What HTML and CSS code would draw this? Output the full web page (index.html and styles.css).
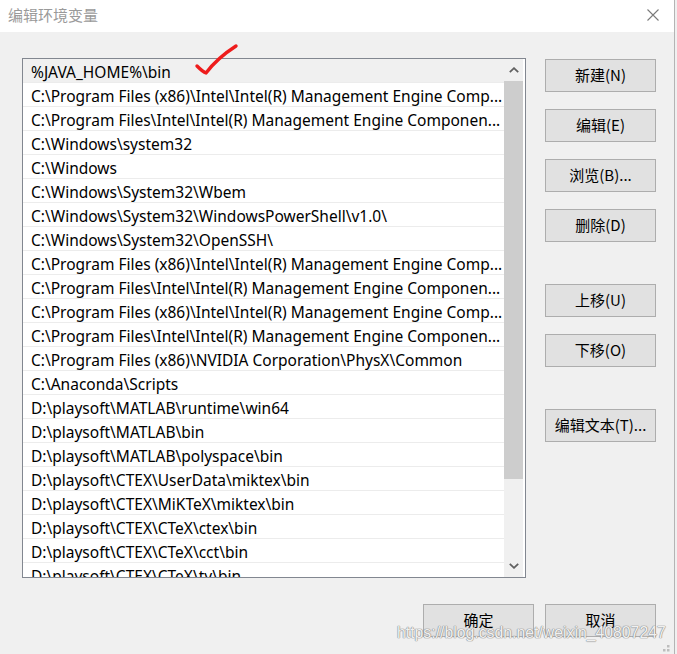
FILE: index.html
```html
<!DOCTYPE html>
<html lang="zh">
<head>
<meta charset="utf-8">
<title>编辑环境变量</title>
<link rel="stylesheet" href="styles.css">
</head>
<body>
<div class="window">
  <div class="titlebar">
    <span class="title">编辑环境变量</span>
    <svg class="close" width="12" height="12" viewBox="0 0 12 12"><path d="M0.5 0.5 L11.5 11.5 M11.5 0.5 L0.5 11.5" stroke="#7a7a7a" stroke-width="1.1" fill="none"/></svg>
  </div>
  <div class="content">
    <div class="main">
      <div class="list">
        <div class="rows">
          <div class="row selected">%JAVA_HOME%\bin</div>
          <div class="row">C:\Program Files (x86)\Intel\Intel(R) Management Engine Comp...</div>
          <div class="row">C:\Program Files\Intel\Intel(R) Management Engine Componen...</div>
          <div class="row">C:\Windows\system32</div>
          <div class="row">C:\Windows</div>
          <div class="row">C:\Windows\System32\Wbem</div>
          <div class="row">C:\Windows\System32\WindowsPowerShell\v1.0\</div>
          <div class="row">C:\Windows\System32\OpenSSH\</div>
          <div class="row">C:\Program Files (x86)\Intel\Intel(R) Management Engine Comp...</div>
          <div class="row">C:\Program Files\Intel\Intel(R) Management Engine Componen...</div>
          <div class="row">C:\Program Files (x86)\Intel\Intel(R) Management Engine Comp...</div>
          <div class="row">C:\Program Files\Intel\Intel(R) Management Engine Componen...</div>
          <div class="row">C:\Program Files (x86)\NVIDIA Corporation\PhysX\Common</div>
          <div class="row">C:\Anaconda\Scripts</div>
          <div class="row">D:\playsoft\MATLAB\runtime\win64</div>
          <div class="row">D:\playsoft\MATLAB\bin</div>
          <div class="row">D:\playsoft\MATLAB\polyspace\bin</div>
          <div class="row">D:\playsoft\CTEX\UserData\miktex\bin</div>
          <div class="row">D:\playsoft\CTEX\MiKTeX\miktex\bin</div>
          <div class="row">D:\playsoft\CTEX\CTeX\ctex\bin</div>
          <div class="row">D:\playsoft\CTEX\CTeX\cct\bin</div>
          <div class="row">D:\playsoft\CTEX\CTeX\ty\bin</div>
        </div>
        <div class="scrollbar">
          <div class="arrow">
            <svg width="10" height="6" viewBox="0 0 10 6"><path d="M0.8 5.2 L5 1.2 L9.2 5.2" stroke="#606060" stroke-width="1.8" fill="none"/></svg>
          </div>
          <div class="thumb"></div>
          <div class="track"></div>
          <div class="arrow">
            <svg width="10" height="6" viewBox="0 0 10 6"><path d="M0.8 0.8 L5 4.8 L9.2 0.8" stroke="#606060" stroke-width="1.8" fill="none"/></svg>
          </div>
        </div>
        <div class="list-pad"></div>
      </div>
      <div class="side">
        <button class="btn">新建(N)</button>
        <button class="btn">编辑(E)</button>
        <button class="btn">浏览(B)...</button>
        <button class="btn">删除(D)</button>
        <button class="btn gap-lg">上移(U)</button>
        <button class="btn">下移(O)</button>
        <button class="btn gap-lg">编辑文本(T)...</button>
      </div>
    </div>
    <div class="footer">
      <button class="btn">确定</button>
      <button class="btn">取消</button>
    </div>
  </div>
  <svg class="check" width="60" height="40" viewBox="0 0 60 40"><path d="M5 27 C8 30 11 33 14 34 C20 26 30 16 44 7" stroke="#ee1c1c" stroke-width="3.4" fill="none" stroke-linecap="round" stroke-linejoin="round"/></svg>
  <div class="watermark">https://blog.csdn.net/weixin_40807247</div>
  <svg class="grip" width="10" height="10" viewBox="0 0 10 10"><rect x="6" y="2" width="2.5" height="2.5" fill="#bdbdbd"/><rect x="2" y="6" width="2.5" height="2.5" fill="#bdbdbd"/><rect x="6" y="6" width="2.5" height="2.5" fill="#bdbdbd"/></svg>
</div>
</body>
</html>
```

FILE: styles.css
```css
* { box-sizing: border-box; }
html, body {
  margin: 0;
  padding: 0;
  background: #f0f0f0;
}
body {
  width: 677px;
  height: 654px;
  overflow: hidden;
  font-family: "Noto Sans", "Noto Sans CJK SC", sans-serif;
}
.window {
  position: relative;
  width: 675px;
  height: 654px;
  background: #f0f0f0;
  border-right: 1px solid #b4b4b4;
}
.titlebar {
  height: 32px;
  background: #ffffff;
  display: flex;
  align-items: center;
  justify-content: space-between;
  padding: 0 15px 3px 8px;
}
.title {
  font-family: "Noto Sans CJK SC", sans-serif;
  font-size: 15px;
  color: #9a9a9a;
}
.close { display: block; }
.content {
  padding: 26px 18px 0 22px;
}
.main {
  display: flex;
  align-items: flex-start;
}
.list {
  width: 504px;
  height: 520px;
  border: 1px solid #828790;
  background: #ffffff;
  display: flex;
}
.rows {
  width: 481px;
  overflow: hidden;
}
.row {
  height: 24px;
  line-height: 20px;
  padding-top: 3px;
  border-bottom: 1px solid #ececec;
  padding-left: 8px;
  font-size: 15.5px;
  color: #000;
  white-space: nowrap;
  overflow: hidden;
}
.row.selected { background: #f0f0f0; }
.scrollbar {
  width: 19px;
  display: flex;
  flex-direction: column;
  background: #f0f0f0;
}
.arrow {
  height: 22px;
  display: flex;
  align-items: center;
  justify-content: center;
}
.arrow svg { display: block; }
.thumb {
  height: 398px;
  background: #cdcdcd;
}
.track { flex: 1; }
.list-pad { width: 2px; }
.side {
  margin-left: 19px;
  padding-top: 1px;
  display: flex;
  flex-direction: column;
  gap: 17px;
}
.btn {
  width: 111px;
  height: 33px;
  margin: 0;
  padding: 0 0 2px;
  background: #e1e1e1;
  border: 1px solid #adadad;
  font-family: "Noto Sans CJK SC", sans-serif;
  font-size: 15px;
  color: #000;
}
.btn.gap-lg { margin-top: 25px; }
.footer {
  margin-top: 26px;
  display: flex;
  justify-content: flex-end;
  gap: 11px;
}
.check {
  position: absolute;
  left: 192px;
  top: 39px;
}
.watermark {
  position: absolute;
  left: 397px;
  top: 624px;
  font-family: "Liberation Sans", sans-serif;
  font-size: 15.8px;
  color: rgba(255, 255, 255, 0.9);
  text-shadow: 0 0 1px #8a8a8a, 0 0 1px #8a8a8a, 0 0 1px #8a8a8a;
  white-space: nowrap;
}
.grip {
  position: absolute;
  right: 3px;
  bottom: 1px;
}
```
